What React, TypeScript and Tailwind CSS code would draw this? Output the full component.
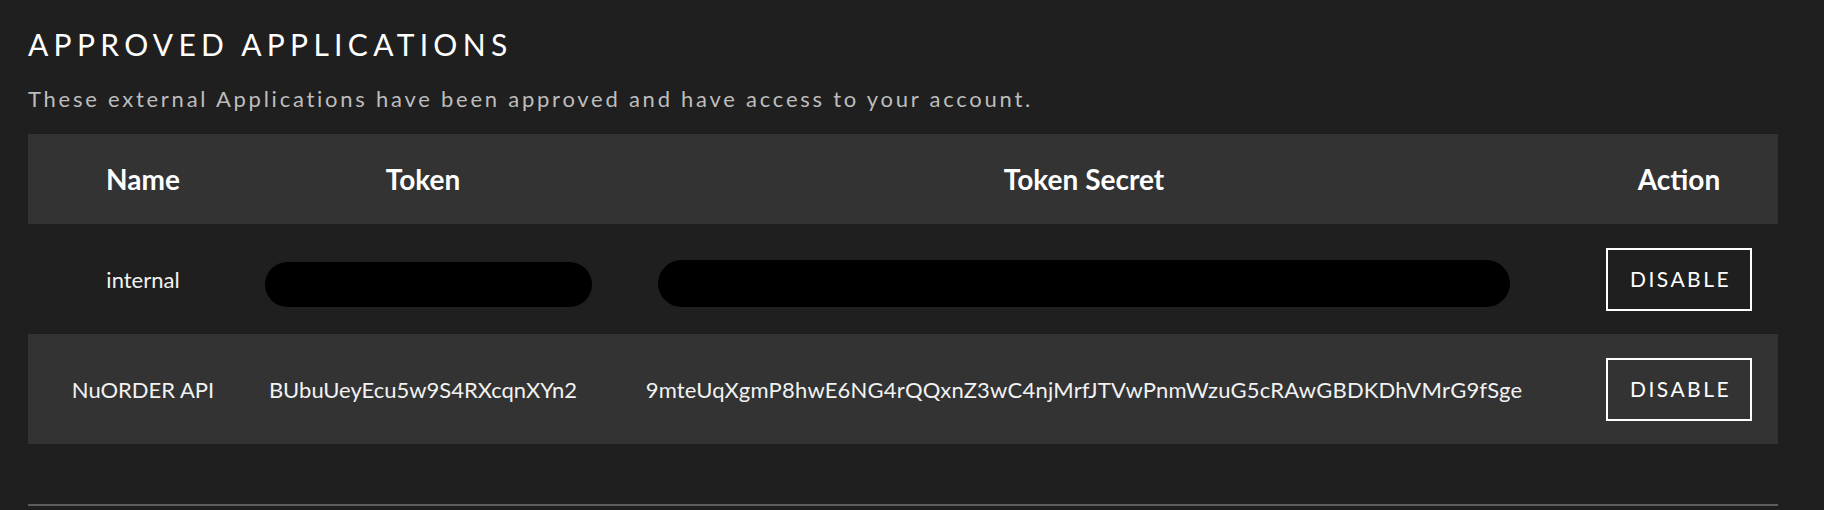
import React from "react";

const rows = [
  { name: "internal", token: null, secret: null },
  {
    name: "NuORDER API",
    token: "BUbuUeyEcu5w9S4RXcqnXYn2",
    secret: "9mteUqXgmP8hwE6NG4rQQxnZ3wC4njMrfJTVwPnmWzuG5cRAwGBDKDhVMrG9fSge",
  },
];

export default function App() {
  return (
    <div
      className="min-h-[510px] w-full bg-[#1f1f1f] text-white"
      style={{ fontFamily: "Lato, 'Open Sans', sans-serif" }}
    >
      <div className="px-[28px] pt-[24px]">
        <h1 className="text-[30px] leading-[40px] tracking-[5.3px] font-normal text-white">
          APPROVED APPLICATIONS
        </h1>
        <p className="mt-[21px] text-[22px] leading-[28px] tracking-[2.75px] text-[#bdbdbd]">
          These external Applications have been approved and have access to your account.
        </p>
        <div className="mt-[21px] w-[1750px]">
          <div className="grid h-[90px] grid-cols-[230px_330px_992px_198px] items-center bg-[#333333] text-[28px] font-bold">
            <div className="text-center">Name</div>
            <div className="text-center">Token</div>
            <div className="text-center">Token Secret</div>
            <div className="text-center">Action</div>
          </div>
          {rows.map((r, i) => (
            <div
              key={r.name}
              className={`grid h-[110px] grid-cols-[230px_330px_992px_198px] items-center text-[22px] ${
                i % 2 === 1 ? "bg-[#333333]" : "bg-[#1f1f1f]"
              }`}
            >
              <div className="text-center text-[#f2f2f2]">{r.name}</div>
              <div className="flex items-center">
                {r.token ? (
                  <div className="w-full text-center text-[#f2f2f2]">{r.token}</div>
                ) : (
                  <div className="ml-[7px] mt-[10px] h-[45px] w-[327px] shrink-0 rounded-full bg-black" />
                )}
              </div>
              <div className="flex items-center">
                {r.secret ? (
                  <div className="w-full whitespace-nowrap text-center tracking-[0.2px] text-[#f2f2f2]">{r.secret}</div>
                ) : (
                  <div className="ml-[70px] mt-[9px] h-[47px] w-[852px] shrink-0 rounded-full bg-black" />
                )}
              </div>
              <div className="flex justify-center">
                <button className="flex h-[63px] w-[146px] items-center justify-center border-2 border-white pl-[3px] text-[21px] tracking-[2.5px] text-white">
                  DISABLE
                </button>
              </div>
            </div>
          ))}
          <div className="mt-[60px] h-[2px] bg-[#5c5c5c]" />
        </div>
      </div>
    </div>
  );
}
